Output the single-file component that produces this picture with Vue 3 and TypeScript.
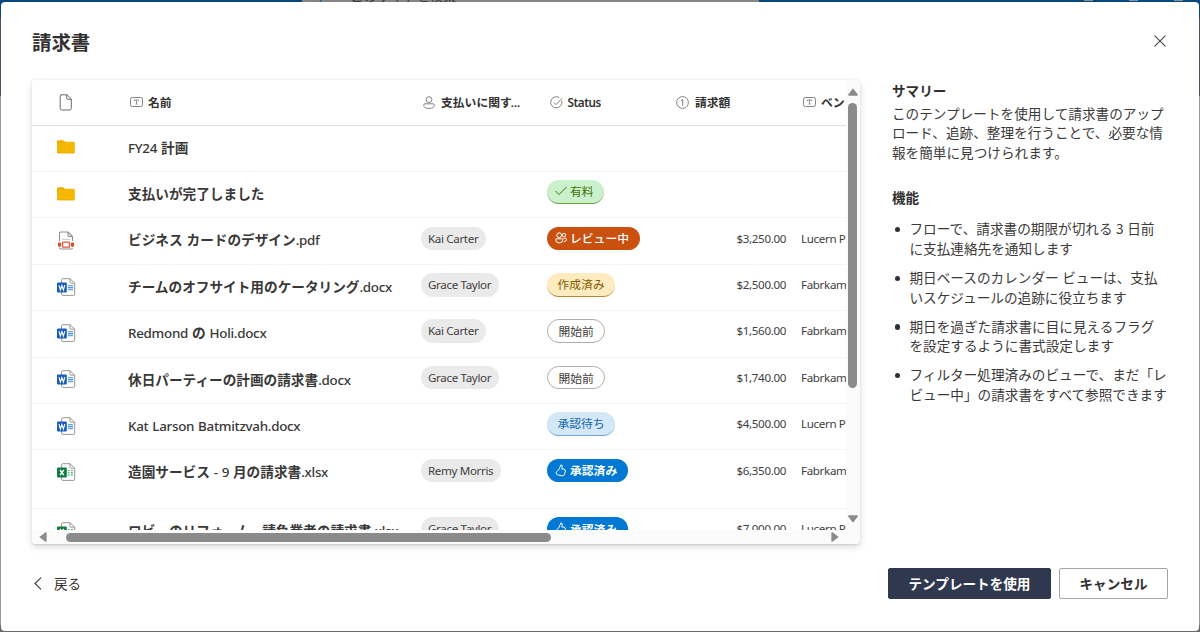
<script setup lang="ts">
type FileKind = 'folder' | 'pdf' | 'word' | 'excel'
type StatusKind = 'paid' | 'review' | 'created' | 'none' | 'pending' | 'approved'

interface Status { kind: StatusKind; label: string }
interface Row {
  kind: FileKind
  name: string
  person?: string
  status?: Status
  amount?: string
  vendor?: string
  tall?: boolean
}

const rows: Row[] = [
  { kind: 'folder', name: 'FY24 計画' },
  { kind: 'folder', name: '支払いが完了しました', status: { kind: 'paid', label: '有料' } },
  { kind: 'pdf', name: 'ビジネス カードのデザイン.pdf', person: 'Kai Carter', status: { kind: 'review', label: 'レビュー中' }, amount: '$3,250.00', vendor: 'Lucern P' },
  { kind: 'word', name: 'チームのオフサイト用のケータリング.docx', person: 'Grace Taylor', status: { kind: 'created', label: '作成済み' }, amount: '$2,500.00', vendor: 'Fabrkam' },
  { kind: 'word', name: 'Redmond の Holi.docx', person: 'Kai Carter', status: { kind: 'none', label: '開始前' }, amount: '$1,560.00', vendor: 'Fabrkam' },
  { kind: 'word', name: '休日パーティーの計画の請求書.docx', person: 'Grace Taylor', status: { kind: 'none', label: '開始前' }, amount: '$1,740.00', vendor: 'Fabrkam' },
  { kind: 'word', name: 'Kat Larson Batmitzvah.docx', status: { kind: 'pending', label: '承認待ち' }, amount: '$4,500.00', vendor: 'Lucern P' },
  { kind: 'excel', name: '造園サービス - 9 月の請求書.xlsx', person: 'Remy Morris', status: { kind: 'approved', label: '承認済み' }, amount: '$6,350.00', vendor: 'Fabrkam', tall: true },
  { kind: 'excel', name: 'ロビーのリフォーム - 請負業者の請求書.xlsx', person: 'Grace Taylor', status: { kind: 'approved', label: '承認済み' }, amount: '$7,000.00', vendor: 'Lucern P' },
]

const summary = ['このテンプレートを使用して請求書のアップ', 'ロード、追跡、整理を行うことで、必要な情', '報を簡単に見つけられます。']
const features = [
  ['フローで、請求書の期限が切れる 3 日前', 'に支払連絡先を通知します'],
  ['期日ベースのカレンダー ビューは、支払', 'いスケジュールの追跡に役立ちます'],
  ['期日を過ぎた請求書に目に見えるフラグ', 'を設定するように書式設定します'],
  ['フィルター処理済みのビューで、まだ「レ', 'ビュー中」の請求書をすべて参照できます'],
]

// Splits a label into Latin and Japanese runs so each gets its own metrics.
function runs(text: string) {
  return (text.match(/[\x00-\x7f]+|[^\x00-\x7f]+/g) ?? []).map((t) => ({ t, latin: t.charCodeAt(0) < 128 }))
}
</script>

<template>
  <div class="page">
    <div class="suite">
      <div class="search">
        <svg class="search-icon" width="12" height="12" viewBox="0 0 12 12"><path d="M1 11.5 5 7" stroke="#1a5d94" stroke-width="1.4" /></svg>
        <span>このサイトを検索</span>
      </div>
      <div class="suite-dots"><i></i><i></i><i></i></div>
    </div>
    <section class="dialog">
      <header class="top">
        <h1>請求書</h1>
        <svg class="close" width="12" height="12" viewBox="0 0 12 12"><path d="M.6.6 11.4 11.4M11.4.6.6 11.4" stroke="#444" stroke-width="1.1" fill="none" /></svg>
      </header>

      <div class="body">
        <div class="card">
          <div class="list">
            <div class="head grid">
              <div class="c-icon">
                <svg class="doc" width="14" height="17" viewBox="0 0 14 17" fill="none" stroke="#6b6966"><path d="M2.2.8H8L12.3 5V14.4Q12.3 16 10.8 16H2.7Q1.2 16 1.2 14.4V2.2Q1.2.8 2.7.8ZM7.7.9V4Q7.7 5.3 9 5.3H12.2" /></svg>
              </div>
              <div class="h h-name">
                <svg width="13" height="10" viewBox="0 0 13 10" fill="none" stroke="#858381"><rect x=".5" y=".5" width="12" height="9" rx="1.8" /><path d="M4.5 3.9V3H8.5V3.9M6.5 3V7M5.5 7H7.5" stroke-width=".9" /></svg>
                <span>名前</span>
              </div>
              <div class="h h-person">
                <svg width="12" height="13" viewBox="0 0 12 13" fill="none" stroke="#858381"><circle cx="6" cy="3.6" r="2.9" /><path d="M2 7.8H10Q11.3 7.8 11.3 9.2 11.3 12.4 6 12.4T.7 9.2Q.7 7.8 2 7.8Z" /></svg>
                <span>支払いに関す<span class="dots">...</span></span>
              </div>
              <div class="h h-status">
                <svg width="13" height="13" viewBox="0 0 13 13" fill="none" stroke="#858381"><path d="M11.7 4.8A5.6 5.6 0 1 1 9.2 1.5M3.9 6.5 6 8.6 12 2.3" /></svg>
                <span class="latin">Status</span>
              </div>
              <div class="h h-amount">
                <svg width="13" height="13" viewBox="0 0 13 13" fill="none" stroke="#858381"><circle cx="6.5" cy="6.5" r="5.9" /><path d="M5 4.8Q6.3 4.3 6.7 3.3V9.9" /></svg>
                <span>請求額</span>
              </div>
              <div class="h h-vendor">
                <svg width="13" height="10" viewBox="0 0 13 10" fill="none" stroke="#858381"><rect x=".5" y=".5" width="12" height="9" rx="1.8" /><path d="M4.5 3.9V3H8.5V3.9M6.5 3V7M5.5 7H7.5" stroke-width=".9" /></svg>
                <span>ベン</span>
              </div>
            </div>

            <div v-for="row in rows" :key="row.name" class="row grid" :class="{ tall: row.tall }">
              <div class="c-icon">
                <svg v-if="row.kind === 'folder'" class="folder" width="18" height="14" viewBox="0 0 18 14"><path d="M0 2Q0 .6 1.3.6H5.8Q6.6.6 7.2 1.2L8.2 1.8H16.5Q17.8 1.8 17.8 3V12Q17.8 13.3 16.5 13.3H1.3Q0 13.3 0 12Z" fill="#f5b800" /><path d="M0 2Q0 .6 1.3.6H5.8Q6.6.6 7.2 1.2L8 1.9 6.8 2.7H0Z" fill="#eeac00" /><path d="M.3 12.8H17.5" stroke="#e6a800" stroke-width=".8" /></svg>
                <svg v-else-if="row.kind === 'pdf'" width="18" height="19" viewBox="0 0 18 19" fill="none"><path d="M3.5 1H11L15.5 5.5V16.5Q15.5 18 14.2 18H3.8Q2.5 18 2.5 16.5V2.2Q2.5 1 3.5 1ZM11 1V4.5Q11 5.5 12 5.5H15.5" stroke="#8f8d8b" stroke-width="1.1" fill="#fff" /><path d="M4.8 8.3H13.2" stroke="#c8c6c4" /><path d="M1 10H17V16.8H1Z" fill="#fff" /><rect x="1" y="11.5" width="3" height="4.2" rx="1" fill="#d8482b" /><rect x="14" y="11.5" width="3" height="4.2" rx="1" fill="#d8482b" /><rect x="5.5" y="11.2" width="7" height="4.9" rx=".6" stroke="#e4573d" stroke-width="1.3" fill="#fff" /></svg>
                <svg v-else width="19" height="18" viewBox="0 0 19 18" fill="none">
                  <path d="M5.7.7H13L17.7 5.2V16.2Q17.7 17.4 16.6 17.4H5.7Q4.6 17.4 4.6 16.2V1.8Q4.6.7 5.7.7ZM13 .7V4.2Q13 5.2 14 5.2H17.6" fill="#fff" stroke="#999795" />
                  <g v-if="row.kind === 'word'"><path d="M11 7.7H16M11 11.7H16" stroke="#5ba5ee" stroke-width="1.2" /><path d="M11 9.7H16" stroke="#3583d8" stroke-width="1.2" /></g>
                  <path v-else d="M11 7.5H12.5M14 7.5H15.8M11 9.7H12.5M14 9.7H15.8M11 11.8H12.5M14 11.8H15.8" stroke="#3cac70" stroke-width="1.2" />
                  <rect x="0" y="4.6" width="9.8" height="9.8" rx="1" :fill="row.kind === 'word' ? '#185abd' : '#107c41'" />
                  <path v-if="row.kind === 'word'" d="M2 7.1 3.4 12 4.9 7.6 6.4 12 7.8 7.1" stroke="#fff" stroke-width="1.15" />
                  <path v-else d="M3 7 6.8 12.1M6.8 7 3 12.1" stroke="#fff" stroke-width="1.4" />
                </svg>
              </div>
              <div class="name"><span v-for="(r, i) in runs(row.name)" :key="i" :class="{ latin: r.latin }">{{ r.t }}</span></div>
              <div class="cell"><span v-if="row.person" class="chip">{{ row.person }}</span></div>
              <div class="cell">
                <span v-if="row.status" class="badge" :class="row.status.kind">
                  <svg v-if="row.status.kind === 'paid'" width="12" height="10" viewBox="0 0 12 10"><path d="M.5 5 4 8.6 11.5.9" /></svg>
                  <svg v-else-if="row.status.kind === 'review'" width="12" height="12" viewBox="0 0 12 12"><circle cx="4.2" cy="3.2" r="2.4" /><circle cx="9" cy="3.1" r="1.8" /><path d="M1.3 6.8H7.2Q7.8 6.8 7.8 7.5 7.8 11 4.2 11T.6 7.5Q.6 6.8 1.3 6.8ZM8.6 6.4H10.7Q11.5 6.4 11.5 7.2 11.5 9.8 8.6 9.7" /></svg>
                  <svg v-else-if="row.status.kind === 'approved'" width="12" height="13" viewBox="0 0 12 13"><path d="M5.9.9Q7.9 1 7.2 3.4L6.8 5.1H8.8Q10.6 5.2 10.3 7L9.7 10Q9.2 12 7.1 11.8L2.6 10.8Q1.3 10.4 1.1 9.1 1 7.8 2.2 7.2 4.3 6 4.9 3.3Z" /></svg>
                  <b>{{ row.status.label }}</b>
                </span>
              </div>
              <div class="cell amount">{{ row.amount }}</div>
              <div class="cell vendor">{{ row.vendor }}</div>
            </div>
          </div>
          <div class="vbar">
            <svg width="10" height="8" viewBox="0 0 10 8"><path d="M5 .3 9.8 6.5Q10 7.7 9 7.7H1Q0 7.7.2 6.5Z" fill="#8b8b8b" /></svg>
            <i></i>
            <svg class="down" width="10" height="8" viewBox="0 0 10 8"><path d="M5 7.7 9.8 1.5Q10 .3 9 .3H1Q0 .3.2 1.5Z" fill="#8b8b8b" /></svg>
          </div>
          <div class="hbar">
            <svg width="8" height="10" viewBox="0 0 8 10"><path d="M.3 5 6.5.2Q7.7 0 7.7 1V9Q7.7 10 6.5 9.8Z" fill="#8b8b8b" /></svg>
            <i></i>
            <svg class="right" width="8" height="10" viewBox="0 0 8 10"><path d="M7.7 5 1.5.2Q.3 0 .3 1V9Q.3 10 1.5 9.8Z" fill="#8b8b8b" /></svg>
          </div>
        </div>

        <aside>
          <h2>サマリー</h2>
          <p><span v-for="l in summary" :key="l" class="line">{{ l }}</span></p>
          <h2 class="second">機能</h2>
          <ul>
            <li v-for="f in features" :key="f[0]"><span v-for="l in f" :key="l" class="line">{{ l }}</span></li>
          </ul>
        </aside>
      </div>

      <footer>
        <div class="back">
          <svg width="8" height="13" viewBox="0 0 8 13"><path d="M7 .7 1 6.5 7 12.3" fill="none" stroke="#3b3a39" stroke-width="1.1" /></svg>
          <span>戻る</span>
        </div>
        <div class="actions">
          <button class="primary">テンプレートを使用</button>
          <button>キャンセル</button>
        </div>
      </footer>
    </section>
  </div>
</template>

<style>
body { margin: 0; overflow: hidden; }
</style>

<style scoped>
* { box-sizing: border-box; }
.page {
  width: 1200px; height: 632px; overflow: hidden; padding: 2px 1px 1.5px;
  display: flex; position: relative;
  background: linear-gradient(#05477f 0 18px, #4d5064 18px 96px, #969696 96px 625px, #6b6b6b 625px);
  font-family: "Noto Sans", "Noto Sans CJK JP", sans-serif; color: #323130;
}
.suite { position: absolute; left: 0; top: 0; width: 1200px; height: 2px; overflow: hidden; display: flex; padding-left: 302px; }
.search { width: 457px; height: 2px; background: #858585; overflow: hidden; display: flex; align-items: flex-end; color: #333; font-size: 13.3px; line-height: 20px; padding-left: 17px; }
.search span { margin: 0 0 -4px 19px; white-space: nowrap; }
.search-icon { flex: none; }
.suite-dots { display: flex; gap: 36px; margin-left: 325px; }
.suite-dots i { width: 9px; height: 1px; background: #8793a0; }
.dialog { flex: 1; background: #fff; border-radius: 4px; display: flex; flex-direction: column; }
.top { display: flex; justify-content: space-between; padding: 0 33.5px 0 31px; height: 78px; flex: none; }
h1 { margin: 26px 0 0; font: 700 19.4px/28px "Noto Sans CJK JP", sans-serif; color: #323130; }
.close { margin-top: 33px; }
.body { display: flex; height: 464px; flex: none; padding-left: 31px; }
.card {
  width: 828px; height: 464px; border-radius: 3px; flex: none; background: #fbfbfb;
  display: grid; grid-template: 450px 14px / 813.5px 14.5px;
  box-shadow: 0 3px 7px rgba(0, 0, 0, .14), 0 .5px 2px rgba(0, 0, 0, .1);
}
.list { overflow: hidden; background: #fff; border-radius: 3px 0 0; }
.grid { display: grid; grid-template-columns: 96px 293px 126px 126px 113px 60px; }
.head { height: 45.6px; border-bottom: 1px solid #e1e1e1; align-items: center; font: 700 11.8px/18px "Noto Sans CJK JP", sans-serif; }
.h { display: flex; align-items: center; gap: 5px; white-space: nowrap; }
.h svg { flex: none; }
.h-name, .h-amount { padding-left: 2px; }
.h-amount { padding-left: 3px; gap: 6px; }
.h-person { padding-left: 2px; gap: 6px; }
.h-status { padding-left: 2.5px; }
.h-vendor { padding-left: 17px; }
.h .latin { font: 600 11.7px/18px "Noto Sans"; letter-spacing: -.45px; }
.dots { font-family: "Noto Sans"; font-size: 11px; margin-left: -1px; }
.c-icon { padding-left: 25px; display: flex; }
.doc { margin-left: 2px; }
.row { height: 46.4px; border-bottom: 1px solid #f4f4f4; }
.row.tall { height: 58.6px; }
.row .c-icon { height: 43.6px; align-items: center; }
.name { font: 700 13.65px/43px "Noto Sans CJK JP", sans-serif; height: 45px; white-space: pre; color: #393837; }
.name .latin { font: 500 13.4px/43px "Noto Sans"; letter-spacing: -.28px; word-spacing: .7px; }
.cell { padding-top: 8.2px; font-size: 11.6px; line-height: 24px; letter-spacing: -.35px; white-space: nowrap; color: #3f3e3d; }
.chip { display: inline-block; height: 23.6px; line-height: 23.6px; padding: 0 7.5px 0 7px; border-radius: 12px; background: #eaeaea; vertical-align: top; }
.badge { display: inline-flex; align-items: center; height: 23.6px; border-radius: 12px; padding: 0 10.5px; font: 400 11.8px/22px "Noto Sans CJK JP", sans-serif; letter-spacing: 0; gap: 3px; vertical-align: top; }
.badge b { font-weight: 400; }
.badge svg { fill: none; stroke: currentColor; stroke-width: 1; flex: none; }
.paid { background: #caf0cc; color: #437406; border-bottom: 1px solid #6a9f42; padding-left: 8px; }
.review { background: #ca5010; color: #fff; padding-left: 8px; }
.review b { font-weight: 500; }
.created { background: #ffebc0; color: #835c00; border-bottom: 1px solid #b28a36; }
.none { border: 1px solid #b0aeac; padding: 0 10.5px; }
.pending { background: #d3e7f7; color: #1268b0; border-bottom: 1px solid #6ba7d9; }
.approved { background: #0078d4; color: #fff; padding-left: 8px; }
.approved b { font-weight: 700; }
.amount { text-align: right; }
.vendor { padding-left: 15px; }
.vbar { grid-area: 1 / 2; display: flex; flex-direction: column; align-items: center; padding-top: 8px; }
.vbar i { width: 9px; height: 285px; border-radius: 5px; background: #8b8b8b; margin-top: 7px; }
.down { margin-top: auto; margin-bottom: 7px; }
.hbar { grid-area: 2 / 1; display: flex; align-items: center; padding: 0 7px 0 7px; }
.hbar i { width: 485px; height: 9px; border-radius: 5px; background: #8b8b8b; margin-left: 19px; }
.right { margin-left: auto; }
aside { padding-left: 32px; font: 400 13.64px/19.45px "Noto Sans CJK JP", sans-serif; color: #3b3a39; }
.line { display: block; white-space: nowrap; word-spacing: .5px; }
h2 { margin: 1px 0 3.4px; font: 700 13.6px/19.5px "Noto Sans CJK JP", sans-serif; color: #323130; }
h2.second { margin: 25.6px 0 12px; }
p { margin: 0; }
ul { margin: 0; padding: 0 0 0 17.5px; list-style: none; }
li { margin-bottom: 9.8px; position: relative; }
li::before { content: ""; position: absolute; left: -15px; top: 7.7px; width: 5.2px; height: 5.2px; border-radius: 50%; background: #323130; }
footer { display: flex; justify-content: space-between; align-items: flex-start; padding: 24px 31px 0 33px; }
.back { display: flex; align-items: center; gap: 12px; height: 31px; margin-top: -.5px; font: 400 13.6px/20px "Noto Sans CJK JP", sans-serif; }
.actions { display: flex; gap: 8px; }
button { width: 109px; height: 31.4px; padding: 0 0 2px; border: 1px solid #a7a5a3; border-radius: 2px; background: #fff; color: #323130; font: 700 13.6px/20px "Noto Sans CJK JP", sans-serif; }
.primary { width: 163px; background: #30384f; border-color: #30384f; color: #fff; }
</style>
